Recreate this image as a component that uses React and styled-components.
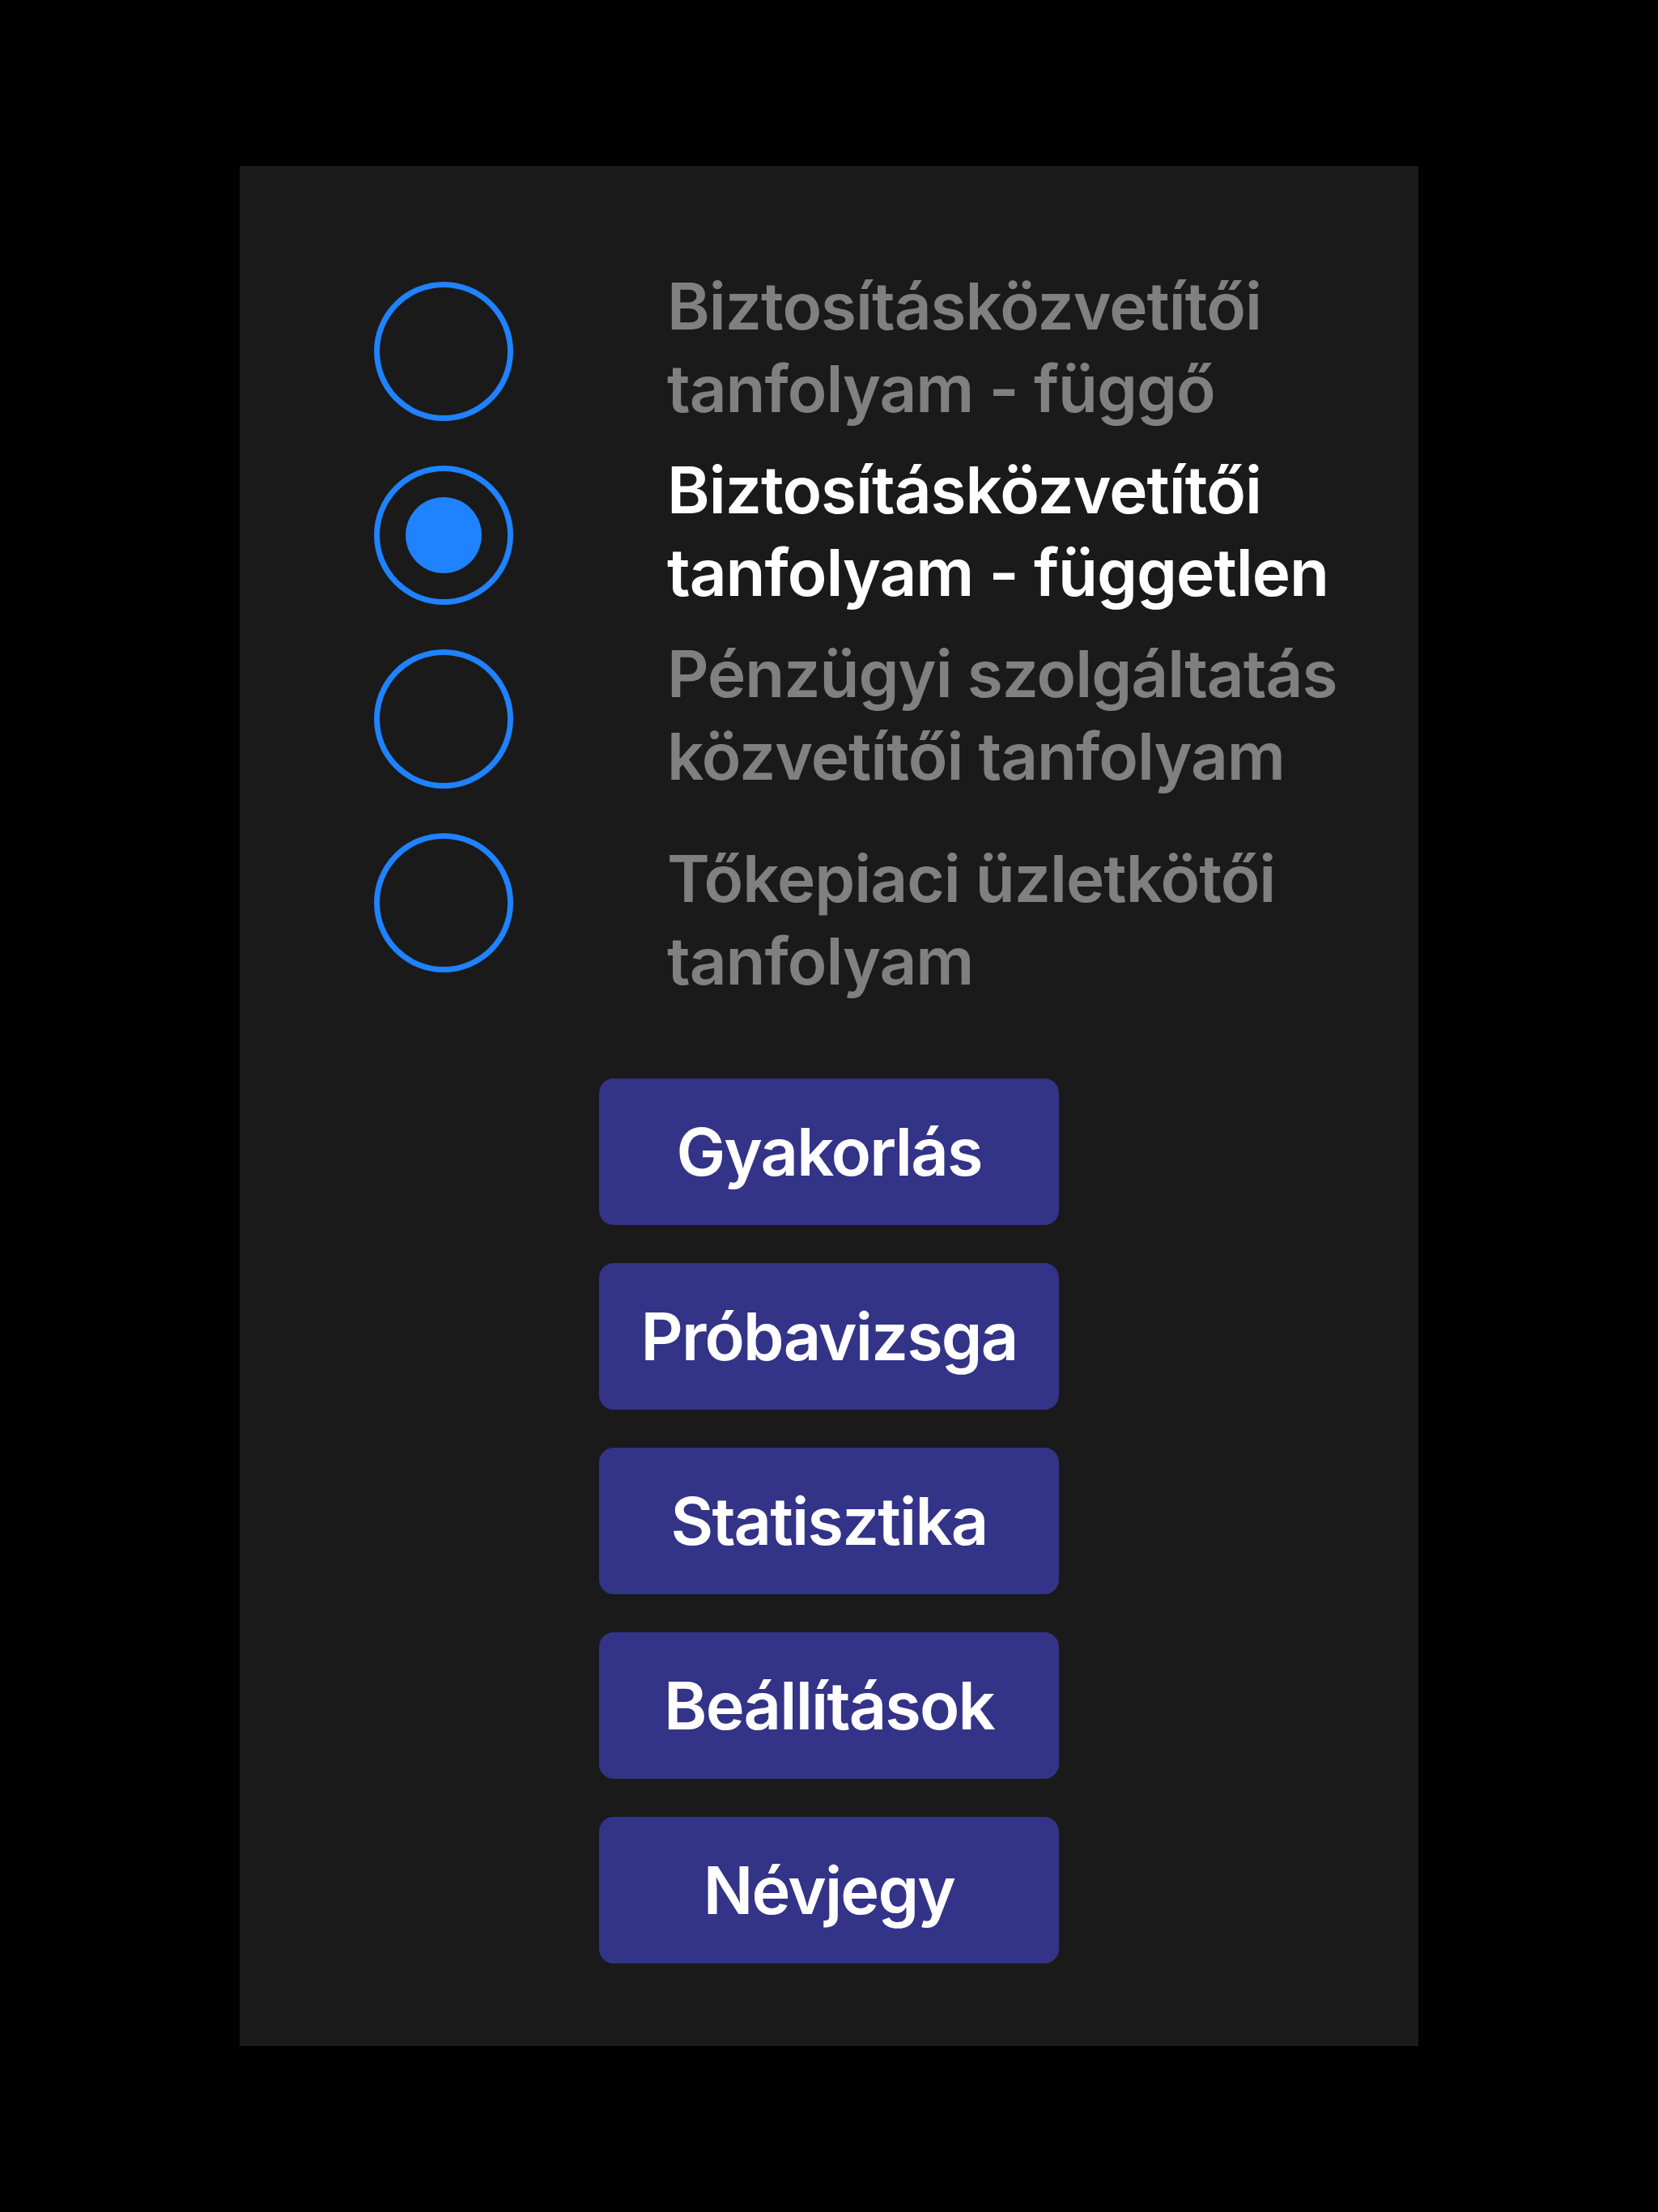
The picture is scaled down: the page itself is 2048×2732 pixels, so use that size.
import React, { useState } from 'react';
import styled, { createGlobalStyle } from 'styled-components';

const GlobalStyle = createGlobalStyle`
  html, body {
    margin: 0;
    padding: 0;
    background: #000000;
  }
  * {
    box-sizing: border-box;
  }
`;

const Page = styled.div`
  display: flex;
  justify-content: center;
  min-height: 2732px;
  padding-top: 205px;
  background: #000000;
  font-family: Inter, 'Noto Sans', sans-serif;
`;

const Panel = styled.div`
  background: #1a1a1a;
  display: flex;
  flex-direction: column;
  height: 2322px;
  padding: 115px 0 102px;
  width: 1456px;
`;

const OptionList = styled.div`
  display: flex;
  flex-direction: column;
  padding-left: 166px;
`;

const OptionRow = styled.label`
  align-items: center;
  cursor: pointer;
  display: flex;
  height: 227px;
`;

const Radio = styled.span`
  align-items: center;
  border: 7px solid #1f82ff;
  border-radius: 50%;
  display: flex;
  flex-shrink: 0;
  height: 172px;
  justify-content: center;
  width: 172px;
`;

const RadioDot = styled.span`
  background: #1f82ff;
  border-radius: 50%;
  height: 94px;
  width: 94px;
`;

const Label = styled.div`
  color: ${(props) => (props.selected ? '#ffffff' : '#808080')};
  font-size: 80px;
  font-weight: 600;
  letter-spacing: -1px;
  line-height: 102px;
  margin-left: 190px;
  margin-top: ${(props) => (props.low ? '42px' : '-10px')};
`;

const Line = styled.span`
  display: block;
  white-space: nowrap;
`;

const ButtonStack = styled.div`
  align-items: center;
  display: flex;
  flex-direction: column;
  gap: 47px;
  margin-top: 104px;
`;

const MenuButton = styled.button`
  background: #333388;
  border: none;
  border-radius: 18px;
  color: #ffffff;
  cursor: pointer;
  font-family: Inter, 'Noto Sans', sans-serif;
  font-size: 81px;
  font-weight: 600;
  height: 181px;
  letter-spacing: -1.8px;
  padding: 0;
  width: 568px;
`;

const courses = [
  { id: 'fuggo', lines: ['Biztosításközvetítői', 'tanfolyam - függő'] },
  { id: 'fuggetlen', lines: ['Biztosításközvetítői', 'tanfolyam - független'] },
  { id: 'penzugyi', lines: ['Pénzügyi szolgáltatás', 'közvetítői tanfolyam'] },
  { id: 'tokepiaci', lines: ['Tőkepiaci üzletkötői', 'tanfolyam'], low: true },
];

const menu = ['Gyakorlás', 'Próbavizsga', 'Statisztika', 'Beállítások', 'Névjegy'];

const App = () => {
  const [selected, setSelected] = useState('fuggetlen');

  return (
    <>
      <GlobalStyle />
      <Page>
        <Panel>
          <OptionList>
            {courses.map((course) => (
              <OptionRow key={course.id} onClick={() => setSelected(course.id)}>
                <Radio>{selected === course.id && <RadioDot />}</Radio>
                <Label selected={selected === course.id} low={course.low}>
                  {course.lines.map((line) => (
                    <Line key={line}>{line}</Line>
                  ))}
                </Label>
              </OptionRow>
            ))}
          </OptionList>
          <ButtonStack>
            {menu.map((item) => (
              <MenuButton key={item}>{item}</MenuButton>
            ))}
          </ButtonStack>
        </Panel>
      </Page>
    </>
  );
};

export default App;
